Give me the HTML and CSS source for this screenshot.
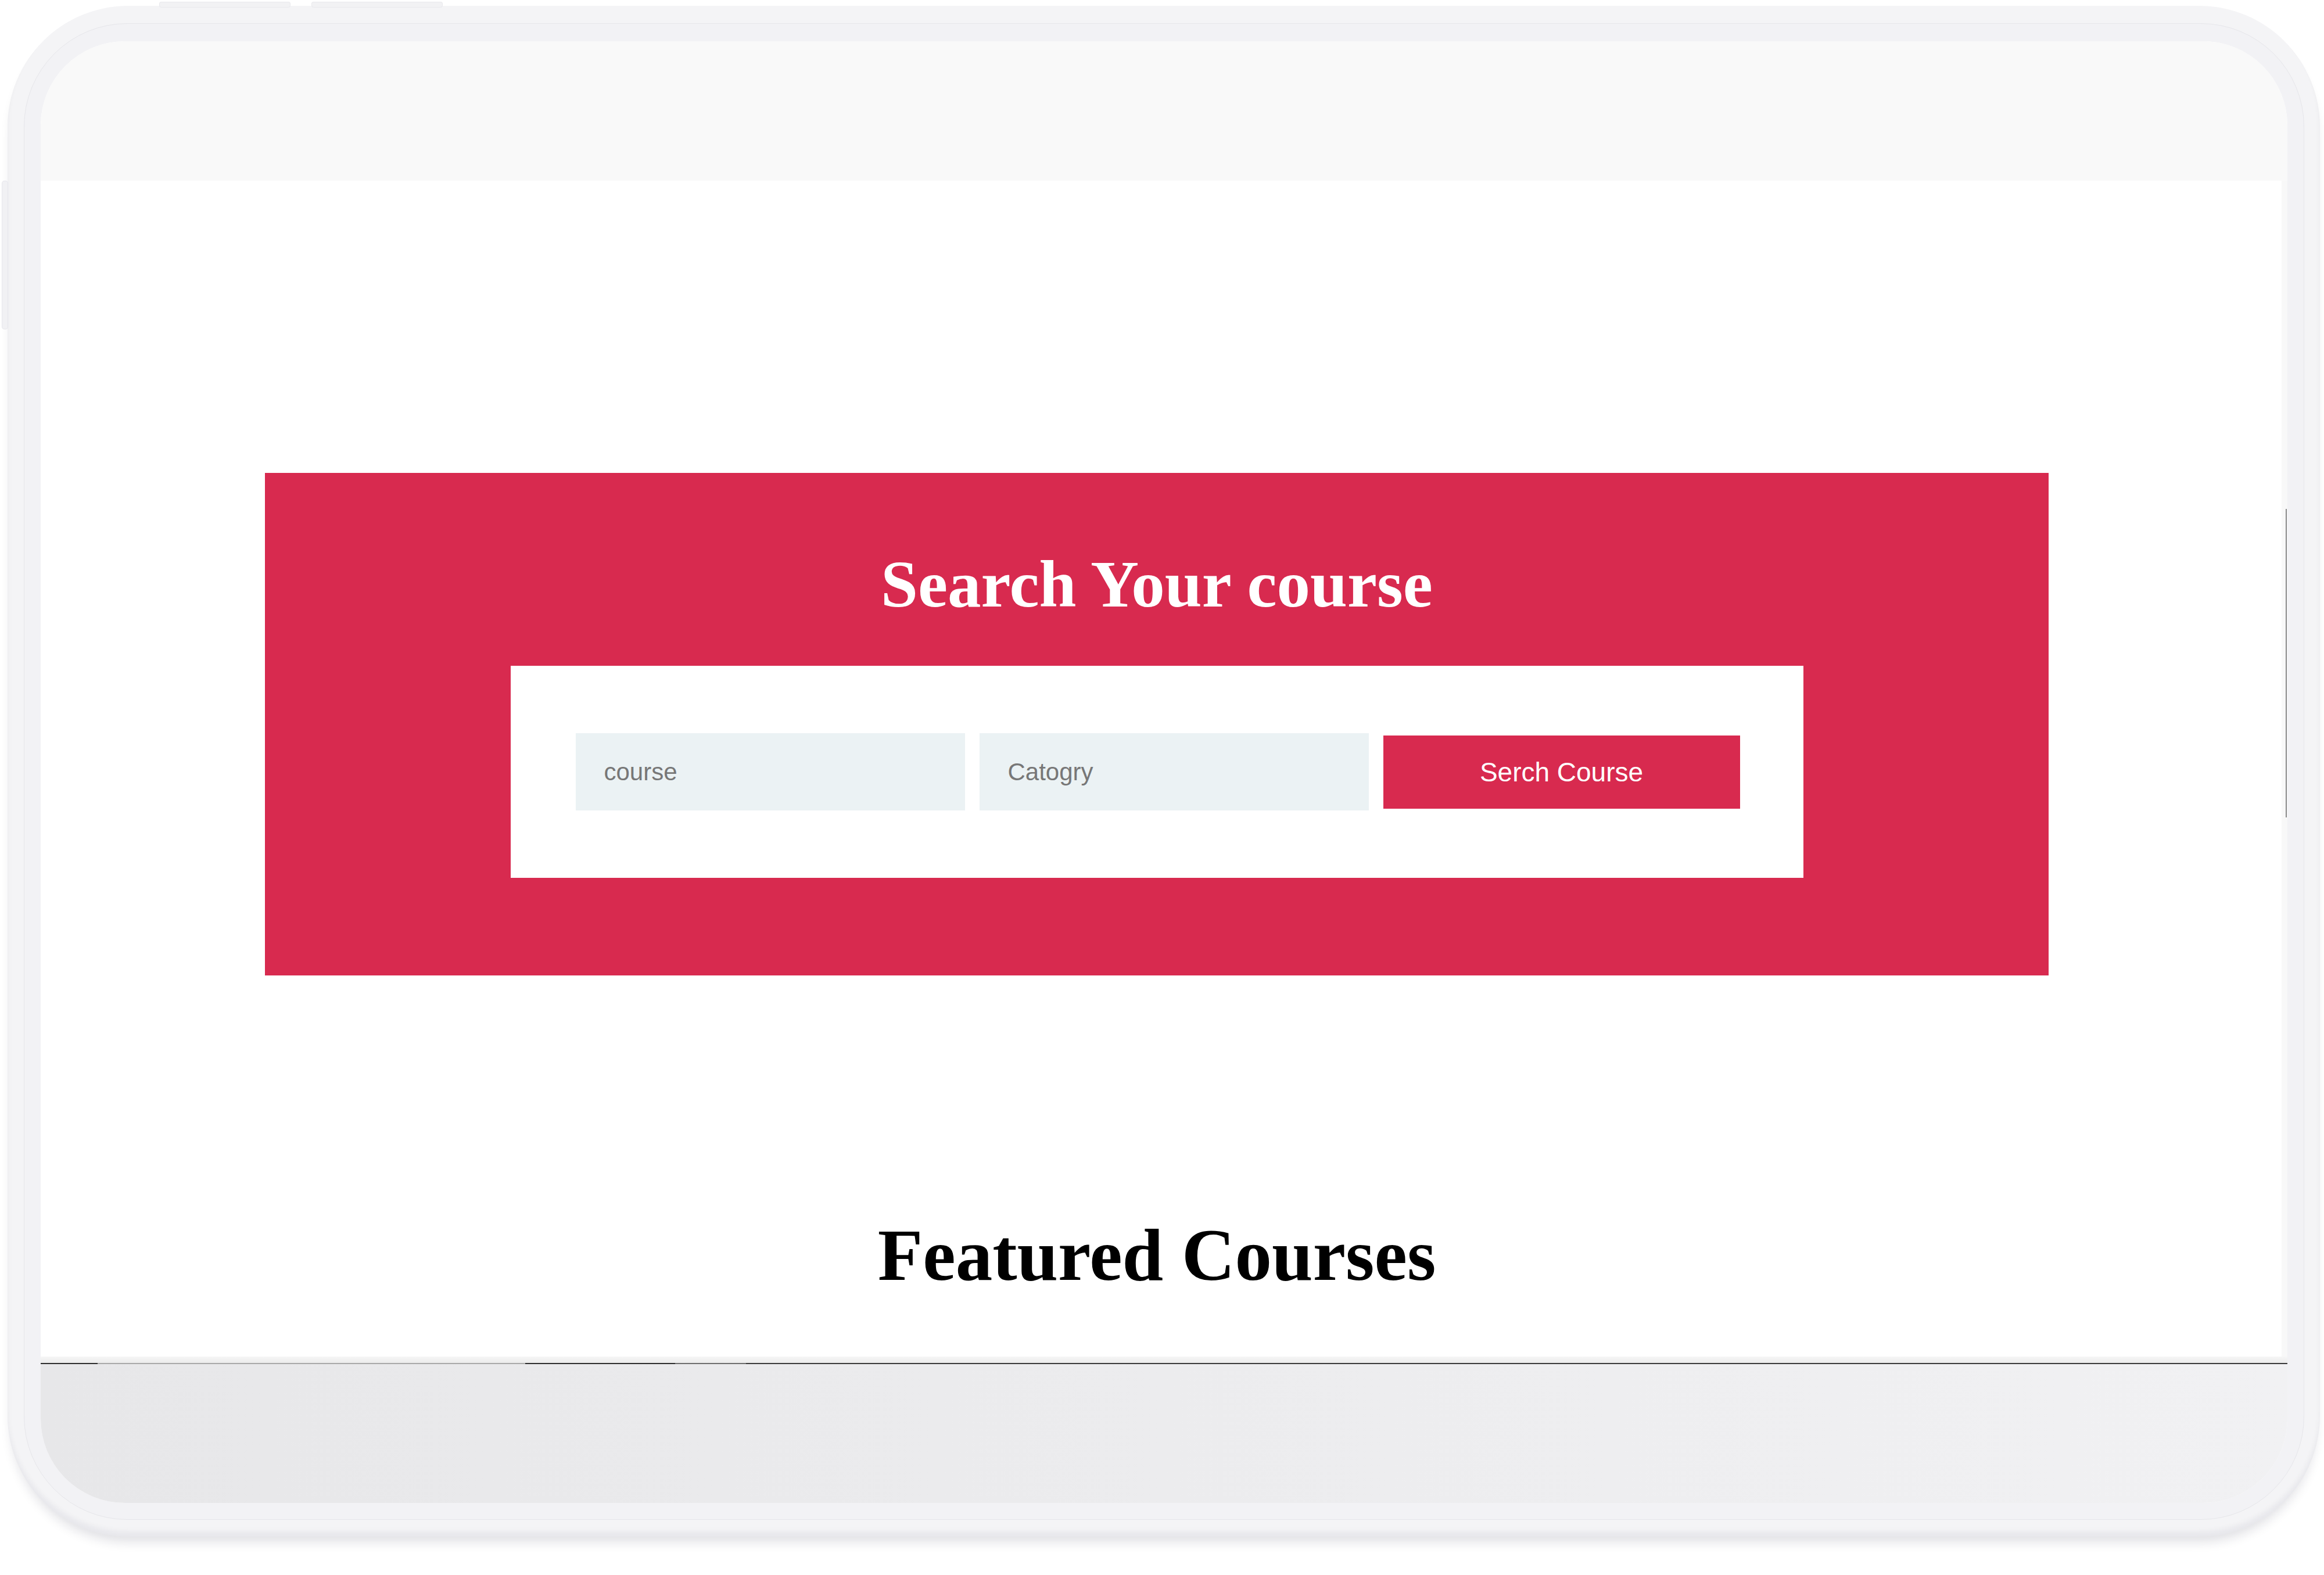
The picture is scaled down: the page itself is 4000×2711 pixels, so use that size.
FILE: index.html
```html
<!DOCTYPE html>
<html lang="en">
<head>
<meta charset="utf-8">
<title>Search Your course</title>
<link rel="stylesheet" href="styles.css">
</head>
<body>
<div class="device">
  <span class="btn-top btn-top-1"></span>
  <span class="btn-top btn-top-2"></span>
  <span class="btn-side"></span>
  <div class="bezel">
    <div class="screen">
      <div class="topbar"></div>
      <div class="viewport">
        <main class="page">
          <section class="search">
            <h2 class="search-title">Search Your course</h2>
            <form class="search-form">
              <input class="field" type="text" placeholder="course">
              <input class="field" type="text" placeholder="Catogry">
              <button class="search-btn" type="button">Serch Course</button>
            </form>
          </section>
          <h2 class="featured-title">Featured Courses</h2>
        </main>
        <div class="scrolltrack"><div class="scrollthumb"></div></div>
      </div>
      <div class="sep"></div>
      <div class="tabline"></div>
      <div class="dock"></div>
    </div>
  </div>
</div>
</body>
</html>
```

FILE: styles.css
```css
html, body {
  margin: 0;
  padding: 0;
}
body {
  width: 4000px;
  height: 2711px;
  background: #ffffff;
  overflow: hidden;
}
.device {
  position: relative;
  box-sizing: border-box;
  margin: 10px 0 0 13px;
  width: 3980px;
  height: 2635px;
  padding: 30px 27px 29px 28px;
  border-radius: 208px;
  background: #f4f4f6;
  box-shadow: 0 16px 20px -8px rgba(20, 20, 50, 0.14), inset 0 -9px 10px rgba(20, 20, 50, 0.05);
}
.btn-top {
  position: absolute;
  top: -7px;
  width: 226px;
  height: 10px;
  border-radius: 4px;
  background: #f2f2f4;
  box-shadow: inset 0 0 0 1px #e9e9ed;
}
.btn-top-1 { left: 261px; }
.btn-top-2 { left: 523px; }
.btn-side {
  position: absolute;
  left: -10px;
  top: 301px;
  width: 11px;
  height: 256px;
  border-radius: 5px;
  background: #f1f1f4;
  box-shadow: inset 0 0 0 1px #e6e6ec;
}
.bezel {
  box-sizing: border-box;
  height: 100%;
  border: 1px solid #e6e6ea;
  border-radius: 178px;
  background: #f2f2f5;
  padding: 30px 28px 28px 28px;
}
.screen {
  display: flex;
  flex-direction: column;
  height: 100%;
  border-radius: 145px;
  overflow: hidden;
  background: #ffffff;
}
.topbar {
  flex: 0 0 240px;
  background: #f9f9f9;
}
.viewport {
  flex: 0 0 2024px;
  display: flex;
  overflow: hidden;
}
.page {
  flex: 1;
  background: #ffffff;
  padding-top: 503px;
  overflow: hidden;
}
.scrolltrack {
  flex: 0 0 10px;
  background: #f8f8f8;
}
.scrollthumb {
  margin: 565px 0 0 7px;
  width: 2px;
  height: 531px;
  background: #8a8a8a;
}
.search {
  box-sizing: border-box;
  margin-left: 386px;
  width: 3070px;
  padding: 134px 0 168px;
  background: #d82a4f;
}
.search-title {
  margin: 0 0 83px;
  font-family: "Liberation Serif", "Times New Roman", serif;
  font-weight: 700;
  font-size: 115px;
  line-height: 115px;
  color: #ffffff;
  text-align: center;
}
.search-form {
  box-sizing: border-box;
  display: flex;
  align-items: center;
  gap: 25px;
  margin: 0 auto;
  width: 2225px;
  height: 365px;
  padding: 0 109px 0 112px;
  background: #ffffff;
}
.field {
  box-sizing: border-box;
  flex: 0 0 670px;
  height: 133px;
  margin: 0;
  padding: 0 0 0 49px;
  border: none;
  outline: none;
  background: #ebf2f4;
  font-family: "Liberation Sans", Arial, sans-serif;
  font-size: 42px;
  color: #555555;
}
.field::placeholder {
  color: #777777;
}
.search-btn {
  flex: 0 0 614px;
  height: 126px;
  margin: 0;
  padding: 0;
  border: none;
  background: #d82a4f;
  color: #ffffff;
  font-family: "Liberation Sans", Arial, sans-serif;
  font-size: 46px;
}
.featured-title {
  margin: 417px 0 0 386px;
  width: 3070px;
  font-family: "Liberation Serif", "Times New Roman", serif;
  font-weight: 700;
  font-size: 127px;
  line-height: 128px;
  color: #000000;
  text-align: center;
}
.sep {
  flex: 0 0 11px;
  background: linear-gradient(#f6f6f6, #ececec);
}
.tabline {
  flex: 0 0 2px;
  background: linear-gradient(to right,
    #2e2e2e 0, #2e2e2e 98px,
    #a9a9a9 98px, #a9a9a9 834px,
    #2e2e2e 834px, #2e2e2e 1092px,
    #6e6e6e 1092px, #6e6e6e 1214px,
    #3a3a3a 1214px, #3a3a3a 100%);
}
.dock {
  flex: 1;
  background: linear-gradient(to right, #e7e7e9, #ececee 50%, #f1f1f3);
}
```
